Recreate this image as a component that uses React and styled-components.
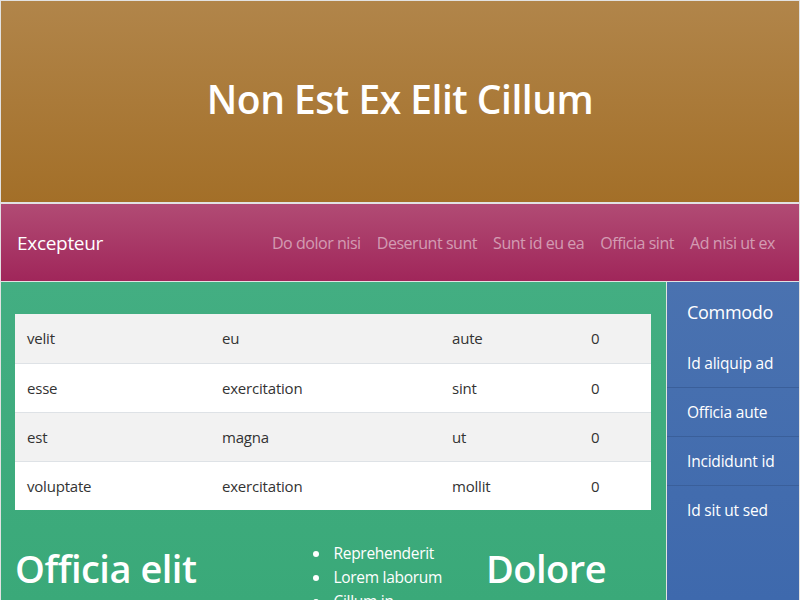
import styled, { createGlobalStyle } from 'styled-components';

const GlobalStyle = createGlobalStyle`
  html, body {
    margin: 0;
    padding: 0;
    background: #e2e2e2;
  }
  body {
    font-family: "Open Sans", "Noto Sans", sans-serif;
  }
  * {
    box-sizing: border-box;
  }
`;

const rows = [
  ['velit', 'eu', 'aute', '0'],
  ['esse', 'exercitation', 'sint', '0'],
  ['est', 'magna', 'ut', '0'],
  ['voluptate', 'exercitation', 'mollit', '0'],
];

const colWidths = ['195px', '230px', '139px', 'auto'];
const links = ['Do dolor nisi', 'Deserunt sunt', 'Sunt id eu ea', 'Officia sint', 'Ad nisi ut ex'];
const sideItems = ['Id aliquip ad', 'Officia aute', 'Incididunt id', 'Id sit ut sed'];

const App = () => {
  return (
    <Page>
      <GlobalStyle />
      <Hero>
        <HeroTitle>Non Est Ex Elit Cillum</HeroTitle>
      </Hero>
      <NavBar>
        <Brand>Excepteur</Brand>
        <NavLinks>
          {links.map((l) => (
            <NavLink key={l}>{l}</NavLink>
          ))}
        </NavLinks>
      </NavBar>
      <Body>
        <Main>
          <Table>
            <tbody>
              {rows.map((r, i) => (
                <Row key={i} $striped={i % 2 === 0}>
                  {r.map((c, j) => (
                    <Cell key={j} $w={colWidths[j]}>{c}</Cell>
                  ))}
                </Row>
              ))}
            </tbody>
          </Table>
          <Bottom>
            <BigHeading>Officia elit</BigHeading>
            <List>
              <li>Reprehenderit</li>
              <li>Lorem laborum</li>
              <li>Cillum in</li>
            </List>
            <BigHeading>Dolore</BigHeading>
          </Bottom>
        </Main>
        <Sidebar>
          <SideTitle>Commodo</SideTitle>
          {sideItems.map((s) => (
            <SideItem key={s}>{s}</SideItem>
          ))}
        </Sidebar>
      </Body>
    </Page>
  );
};

const Page = styled.div`
  width: 800px;
  height: 600px;
  overflow: hidden;
  padding: 1px 1px 0 1px;
  display: flex;
  flex-direction: column;
`;

const Hero = styled.header`
  height: 201px;
  flex-shrink: 0;
  background: linear-gradient(180deg, #b1854a 0%, #a36f28 100%);
  display: flex;
  align-items: center;
  justify-content: center;
  padding-bottom: 6px;
`;

const HeroTitle = styled.h1`
  margin: 0;
  color: #fff;
  font-size: 39px;
  font-weight: 600;
  letter-spacing: -0.5px;
`;

const NavBar = styled.nav`
  margin-top: 2px;
  height: 77px;
  flex-shrink: 0;
  background: linear-gradient(180deg, #b14b74 0%, #a0265a 100%);
  display: flex;
  align-items: center;
  justify-content: space-between;
  padding: 0 24px 0 16px;
`;

const Brand = styled.div`
  color: #fff;
  font-size: 19px;
  letter-spacing: -0.3px;
`;

const NavLinks = styled.div`
  display: flex;
  gap: 16px;
`;

const NavLink = styled.span`
  color: rgba(255, 255, 255, 0.5);
  font-size: 16px;
  letter-spacing: -0.45px;
`;

const Body = styled.div`
  margin-top: 1px;
  flex: 1;
  display: flex;
  gap: 1px;
  min-height: 0;
`;

const Main = styled.main`
  flex: 1;
  background: linear-gradient(180deg, #43ae82 0%, #3aa979 100%);
  padding: 32px 15px 0 14px;
  overflow: hidden;
`;

const Table = styled.table`
  width: 100%;
  border-collapse: collapse;
  font-size: 15px;
  color: #333;
`;

const Row = styled.tr`
  height: 49px;
  background: ${(p) => (p.$striped ? '#f2f2f2' : '#fff')};
  & + & {
    border-top: 1px solid #dee2e6;
  }
`;

const Cell = styled.td`
  width: ${(p) => p.$w};
  padding: 0 12px;
  vertical-align: middle;
  letter-spacing: -0.2px;
`;

const Bottom = styled.div`
  display: flex;
  align-items: flex-start;
  margin-top: 24px;
  color: #fff;
`;

const BigHeading = styled.h2`
  margin: 12px 0 0;
  font-size: 38px;
  font-weight: 600;
  letter-spacing: -0.5px;
  line-height: 1.2;
`;

const List = styled.ul`
  margin: 7px 44px 0 115px;
  padding-left: 19px;
  font-size: 15.5px;
  line-height: 24px;
  letter-spacing: -0.3px;

  li {
    padding-left: 3px;
  }
`;

const Sidebar = styled.aside`
  width: 132px;
  flex-shrink: 0;
  background: linear-gradient(180deg, #4a72b0 0%, #3e69ad 100%);
  display: flex;
  flex-direction: column;
`;

const SideTitle = styled.div`
  color: #fff;
  font-size: 18px;
  padding: 18px 20px 0;
  height: 56px;
  letter-spacing: -0.3px;
`;

const SideItem = styled.div`
  color: #fff;
  font-size: 15.5px;
  height: 49px;
  display: flex;
  align-items: center;
  padding: 0 20px;
  letter-spacing: -0.2px;
  & + & {
    border-top: 1px solid #3a5f9a;
  }
`;

export default App;
